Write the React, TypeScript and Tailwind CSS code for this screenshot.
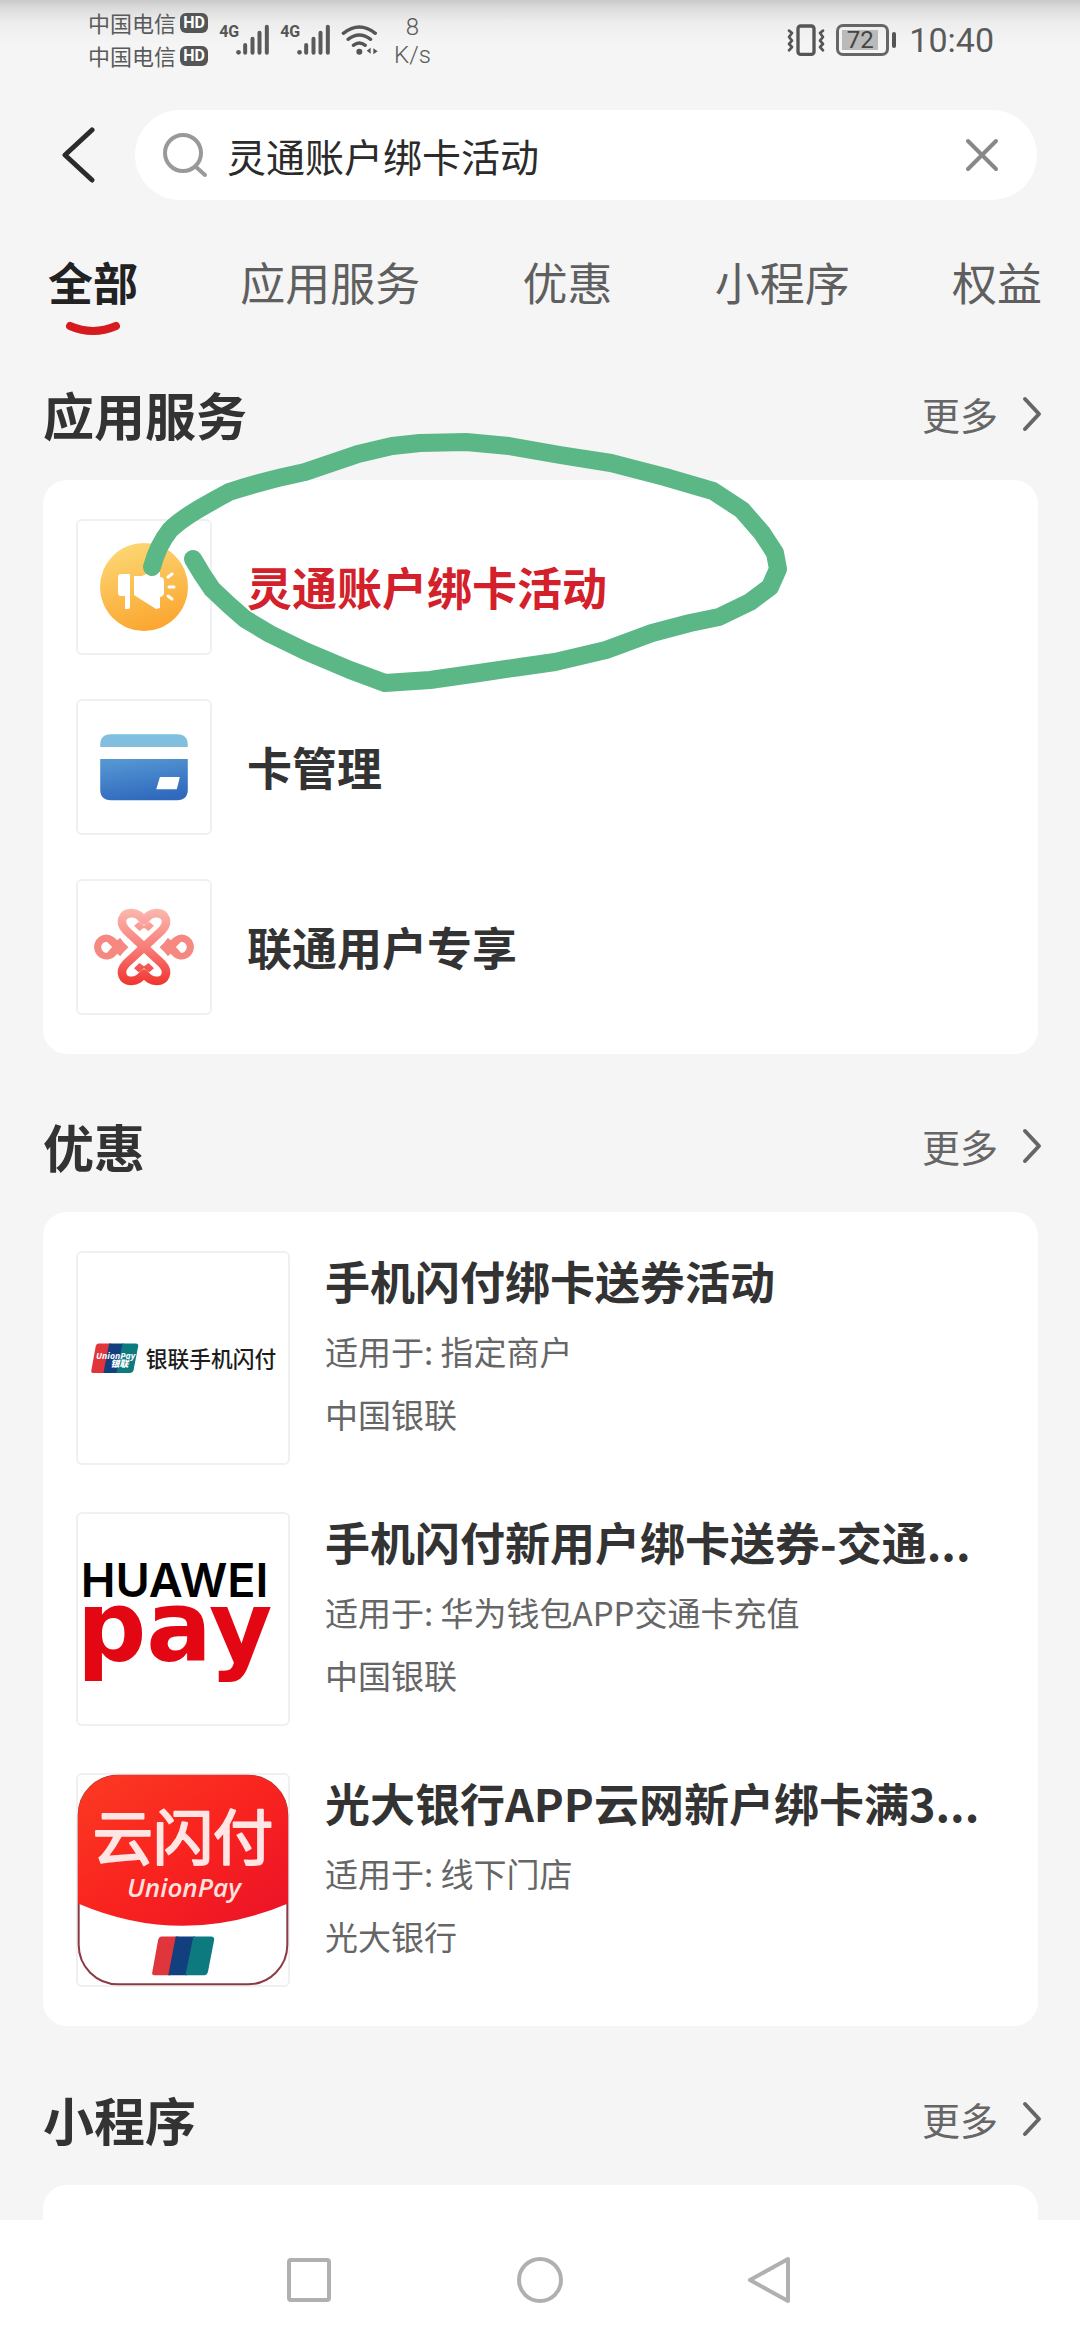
import type { ReactNode } from 'react';

function SignalIcon() {
  return (
    <svg viewBox="0 0 152 96" className="h-8 w-[51px] overflow-visible" aria-hidden="true">
      <text x="0" y="40" fontSize="48" fontWeight="700" fontFamily="Roboto, sans-serif" fill="#555">
        4G
      </text>
      <g fill="#5a5a5a">
        <circle cx="58" cy="85" r="7" />
        <rect x="72" y="57" width="12" height="35" rx="6" />
        <rect x="94" y="38" width="12" height="54" rx="6" />
        <rect x="115" y="20" width="12" height="72" rx="6" />
        <rect x="137" y="2" width="12" height="90" rx="6" />
      </g>
    </svg>
  );
}

function WifiIcon() {
  return (
    <svg viewBox="0 0 112 96" className="h-8 w-[38px]" fill="none" stroke="#555" strokeLinecap="round" aria-hidden="true">
      <path d="M6 28 Q54 -10 102 28" strokeWidth="10" />
      <path d="M20 46 Q54 20 88 46" strokeWidth="10" />
      <path d="M36 64 Q54 50 72 64" strokeWidth="10" />
      <circle cx="54" cy="83" r="9" fill="#555" stroke="none" />
      <path d="M76 80 L88 71 V89 Z M109 82 L96 73 V91 Z" fill="#555" stroke="none" />
    </svg>
  );
}

function VibrateIcon() {
  return (
    <svg viewBox="0 0 114 96" className="h-8 w-[38px]" fill="none" stroke="#555" strokeLinecap="round" strokeLinejoin="round" aria-hidden="true">
      <rect x="33" y="6" width="48" height="85" rx="8" strokeWidth="10" />
      <path d="M6 20 L15 27 L6 39 L15 50 L6 60 L15 69 L6 79" strokeWidth="8" />
      <path d="M108 20 L99 27 L108 39 L99 50 L108 60 L99 69 L108 79" strokeWidth="8" />
    </svg>
  );
}

function Carrier() {
  return (
    <div className="flex items-center gap-1">
      <span className="text-[22px] leading-[33px]">中国电信</span>
      <span className="flex h-5 w-7 items-center justify-center rounded-md bg-[#555] font-[Roboto,sans-serif] text-base leading-5 font-bold text-white">
        HD
      </span>
    </div>
  );
}

function StatusBar() {
  return (
    <header className="flex items-start justify-between bg-[linear-gradient(#c8c8c8_0px,#d8d8d8_6px,#ededed_22px,#f5f5f5_44px)] pt-[6px] pr-[86px] pb-2 pl-[88px] text-[#5a5a5a]">
      <div className="flex items-start gap-[11px]">
        <div>
          <Carrier />
          <Carrier />
        </div>
        <div className="flex gap-[10px] pt-[18px]">
          <SignalIcon />
          <SignalIcon />
          <WifiIcon />
        </div>
        <div className="pt-[7px] pl-1 text-center font-[Roboto,sans-serif] text-2xl leading-[28px] font-light">
          <div>8</div>
          <div>K/s</div>
        </div>
      </div>
      <div className="flex items-center pt-[18px]">
        <VibrateIcon />
        <div className="ml-[11px] flex h-8 w-[53px] rounded-[7px] border-3 border-[#666] p-[3px]">
          <div className="flex w-9 items-center justify-center bg-[#bababa] font-[Roboto,sans-serif] text-2xl leading-none text-[#444]">
            <span>72</span>
          </div>
        </div>
        <div className="ml-[3px] h-4 w-1 rounded-full bg-[#555]" />
        <time className="ml-[13px] font-[Roboto,sans-serif] text-[34px] leading-8">10:40</time>
      </div>
    </header>
  );
}

function SearchBar() {
  return (
    <div className="flex items-center pt-[30px] pr-[43px] pl-[60px]">
      <button type="button" aria-label="返回" className="mr-[39px]">
        <svg viewBox="0 0 36 56" className="h-14 w-9" fill="none" stroke="#2b2b2b" strokeWidth="5" strokeLinecap="round" strokeLinejoin="round">
          <path d="M32 3 L5 28 L32 53" />
        </svg>
      </button>
      <label className="flex h-[90px] flex-1 items-center rounded-full bg-white pr-[37px] pl-[28px]">
        <svg viewBox="0 0 46 46" className="h-[46px] w-[46px]" fill="none" stroke="#999" strokeWidth="4" strokeLinecap="round">
          <circle cx="20" cy="21" r="18" />
          <path d="M33 35 L42 43" />
        </svg>
        <input
          type="text"
          aria-label="搜索"
          defaultValue="灵通账户绑卡活动"
          className="ml-[18px] min-w-0 flex-1 bg-transparent text-[39px] leading-[58px] text-[#2b2b2b] outline-none"
        />
        <button type="button" aria-label="清除">
          <svg viewBox="0 0 36 36" className="h-9 w-9" stroke="#888" strokeWidth="4" strokeLinecap="round">
            <path d="M4 4 L32 32 M32 4 L4 32" />
          </svg>
        </button>
      </label>
    </div>
  );
}

function Tabs() {
  const tabs = ['全部', '应用服务', '优惠', '小程序', '权益'];
  return (
    <nav className="flex items-start justify-between pt-[52px] pr-[38px] pl-12">
      {tabs.map((tab, i) => (
        <button
          key={tab}
          type="button"
          className={
            i === 0
              ? 'flex flex-col items-center text-[45px] leading-[60px] font-bold text-[#222]'
              : 'text-[45px] leading-[60px] text-[#5f5f5f]'
          }
        >
          {tab}
          {i === 0 && (
            <svg viewBox="0 0 58 18" className="mt-2 h-[18px] w-[58px]" fill="none" stroke="#d71920" strokeWidth="8" strokeLinecap="round">
              <path d="M6 6 Q29 16 52 6" />
            </svg>
          )}
        </button>
      ))}
    </nav>
  );
}

function SectionHeader({ title }: { title: string }) {
  return (
    <div className="flex h-[126px] items-center justify-between pr-[38px] pb-[6px] pl-[43px]">
      <h2 className="text-[51px] leading-[74px] font-bold text-[#333]">{title}</h2>
      <a href="#more" className="flex items-center gap-6 text-[38px] leading-[56px] text-[#666]">
        更多
        <svg viewBox="0 0 20 36" className="h-9 w-5" fill="none" stroke="#666" strokeWidth="4" strokeLinecap="round" strokeLinejoin="round">
          <path d="M3 3 L17 18 L3 33" />
        </svg>
      </a>
    </div>
  );
}

function MegaphoneIcon() {
  return (
    <svg viewBox="0 0 136 136" className="h-full w-full">
      <defs>
        <linearGradient id="gold" x1="0.3" y1="0" x2="0.6" y2="1">
          <stop offset="0" stopColor="#fcd774" />
          <stop offset="1" stopColor="#fba52f" />
        </linearGradient>
      </defs>
      <circle cx="68" cy="68" r="44" fill="url(#gold)" />
      <path
        d="M42 58 Q42 55 45 55 H54 V88 Q54 90 52 90 H49 V77 H45 Q42 77 42 74 Z M58 57 H66 L74 53 H84 V58 Q88 58 88 63 V74 Q88 77 84 78 V89 L80 90 L58 76 Z"
        fill="#fff"
      />
      <path d="M92 58 L96 55 M93 68 H98 M92 77 L96 80" stroke="#fff" strokeWidth="3" strokeLinecap="round" />
    </svg>
  );
}

function CardIcon() {
  return (
    <svg viewBox="47 55 410 410" className="h-full w-full">
      <defs>
        <linearGradient id="cardTop" x1="0" y1="0" x2="0" y2="1">
          <stop offset="0" stopColor="#7cbfe2" />
          <stop offset="1" stopColor="#86bedd" />
        </linearGradient>
        <linearGradient id="cardBody" x1="0.3" y1="0" x2="0.6" y2="1">
          <stop offset="0" stopColor="#5496d2" />
          <stop offset="1" stopColor="#2f68bd" />
        </linearGradient>
      </defs>
      <path d="M120 200 V193 Q120 161 152 161 H352 Q384 161 384 193 V200 Z" fill="url(#cardTop)" />
      <path d="M120 236 H384 V328 Q384 360 352 360 H152 Q120 360 120 328 Z" fill="url(#cardBody)" />
      <path d="M300 290 H360 L351 327 H289 Z" fill="#fff" />
    </svg>
  );
}

function KnotIcon() {
  const ring =
    'M138 762 A38 38 0 1 0 160 832 L172 820 L180 828 L190 816 L205 801 L190 786 L180 772 L172 780 L160 770 A38 38 0 0 0 138 762 Z M140 784 L156 800 L140 818 A17 17 0 1 1 140 784 Z';
  return (
    <svg viewBox="47 595 410 410" className="h-full w-full">
      <defs>
        <linearGradient id="knot" gradientUnits="userSpaceOnUse" x1="0" y1="685" x2="0" y2="915">
          <stop offset="0" stopColor="#fbb8b0" />
          <stop offset="0.5" stopColor="#f77f78" />
          <stop offset="1" stopColor="#f0342f" />
        </linearGradient>
      </defs>
      <g fill="none" stroke="url(#knot)" strokeWidth="26" strokeLinejoin="round">
        <path d="M252 800 L198 750 C174 724 188 698 214 698 C232 698 240 706 252 720 C264 706 272 698 290 698 C316 698 330 724 306 750 Z" />
        <path d="M252 800 L198 850 C174 876 188 902 214 902 C232 902 240 894 252 880 C264 894 272 902 290 902 C316 902 330 876 306 850 Z" />
      </g>
      <g fill="url(#knot)">
        <path d="M222 736 L236 724 L252 736 L268 724 L282 736 L266 752 L252 742 L238 752 Z" />
        <path d="M222 864 L236 876 L252 864 L268 876 L282 864 L266 848 L252 858 L238 848 Z" />
      </g>
      <g fill="#f58880" fillRule="evenodd">
        <path d={ring} />
        <path d={ring} transform="matrix(-1 0 0 1 504 0)" />
      </g>
    </svg>
  );
}

function Slanted() {
  return (
    <>
      <path d="M22 0 H60 L42 88 H6 Q-1 88 1 80 L14 8 Q16 0 22 0 Z" fill="#e0353b" />
      <path d="M54 0 H98 L80 88 H37 Z" fill="#12407f" />
      <path d="M94 0 H134 Q142 0 141 8 L127 80 Q125 88 118 88 H76 Z" fill="#0d7a80" />
    </>
  );
}

function QuickPassLogo() {
  return (
    <svg viewBox="48 66 640 640" className="h-full w-full">
      <g transform="translate(93 343)">
        <Slanted />
        <text x="15" y="45" fontSize="26" fontStyle="italic" fontWeight="700" fontFamily="'Open Sans', sans-serif" fill="#fff">
          UnionPay
        </text>
        <text x="58" y="71" fontSize="27" fontStyle="italic" fontWeight="900" fontFamily="'Noto Sans CJK SC', sans-serif" fill="#fff">
          银联
        </text>
      </g>
      <text x="257" y="412" fontSize="65" fontWeight="500" fontFamily="'Noto Sans CJK SC', sans-serif" fill="#1c1c1c">
        银联手机闪付
      </text>
    </svg>
  );
}

function HuaweiPayLogo() {
  return (
    <svg viewBox="48 38 642 642" className="h-full w-full">
      <text x="62" y="294" fontSize="140" fontWeight="600" fontFamily="Inter, sans-serif" fill="#000">
        HUAWEI
      </text>
      <text x="50" y="486" fontSize="292" fontWeight="700" fontFamily="'DejaVu Sans', sans-serif" fill="#e30613">
        pay
      </text>
    </svg>
  );
}

function UnionPayLogo() {
  return (
    <svg viewBox="48 42 640 640" className="h-full w-full">
      <defs>
        <linearGradient id="redTop" x1="0" y1="0" x2="1" y2="1">
          <stop offset="0" stopColor="#fb3a22" />
          <stop offset="0.5" stopColor="#f9231f" />
          <stop offset="1" stopColor="#ea1228" />
        </linearGradient>
        <clipPath id="appShape">
          <rect x="54" y="48" width="628" height="628" rx="120" />
        </clipPath>
      </defs>
      <rect x="56" y="50" width="624" height="624" rx="118" fill="#fff" stroke="#8c3a44" strokeWidth="6" />
      <path d="M54 48 H682 V432 Q368 566 54 432 Z" fill="url(#redTop)" clipPath="url(#appShape)" />
      <text
        x="368"
        y="302"
        textAnchor="middle"
        fontSize="180"
        fontWeight="400"
        fontFamily="'Noto Sans CJK SC', sans-serif"
        fill="#ffe6e4"
        stroke="#ffe6e4"
        strokeWidth="6"
        strokeLinejoin="round"
      >
        云闪付
      </text>
      <text x="371" y="412" textAnchor="middle" fontSize="78" fontStyle="italic" fontWeight="600" fontFamily="'Open Sans', sans-serif" fill="#ffe1df">
        UnionPay
      </text>
      <g transform="translate(275 531) scale(1.32)">
        <Slanted />
      </g>
    </svg>
  );
}

function ServiceRow({ icon, name, hit }: { icon: ReactNode; name: string; hit?: boolean }) {
  return (
    <li>
      <a href="#service" className="flex items-center gap-[35px]">
        <span className="h-[136px] w-[136px] shrink-0 rounded-md ring-2 ring-[#f0f0f0] ring-inset">{icon}</span>
        <span className={hit ? 'text-[45px] leading-[66px] font-bold text-[#d3202a]' : 'text-[45px] leading-[66px] font-bold text-[#333]'}>
          {name}
        </span>
      </a>
    </li>
  );
}

function OfferRow({ logo, title, scope, owner }: { logo: ReactNode; title: string; scope: string; owner: string }) {
  return (
    <li>
      <a href="#offer" className="flex items-start gap-[35px]">
        <span className="h-[214px] w-[214px] shrink-0 rounded-md ring-2 ring-[#f0f0f0] ring-inset">{logo}</span>
        <span className="flex min-w-0 flex-col text-[33px] leading-[63px] text-[#666]">
          <span className="pb-[9px] text-[45px] leading-[60px] font-bold whitespace-nowrap text-[#333]">{title}</span>
          <span className="truncate">适用于: {scope}</span>
          <span className="truncate">{owner}</span>
        </span>
      </a>
    </li>
  );
}

function Scribble() {
  return (
    <svg
      viewBox="140 430 660 270"
      className="pointer-events-none absolute -top-[50px] left-[97px] h-[270px] w-[660px]"
      fill="none"
      stroke="#5bb886"
      strokeWidth="18"
      strokeLinecap="round"
      strokeLinejoin="round"
      aria-hidden="true"
    >
      <path d="M152 567 C156 552 162 540 170 530 C184 516 206 505 229 492 Q266 480 305 472 L358 454 L392 446 L420 443 L466 442 L509 446 L560 455 L611 463 L665 477 L713 491 L742 510 L762 533 L775 553 L778 569 L770 587 L750 602 L719 617 L690 623 L652 633 L606 650 L555 662 L520 667 L479 673 L430 680 L385 683 L350 670 L305 651 L270 634 L245 619 L229 605 L212 589 L202 574 L193 559" />
    </svg>
  );
}

function SystemNav() {
  return (
    <footer className="flex h-[120px] shrink-0 items-center justify-center gap-[183px] bg-white">
      <button type="button" aria-label="最近任务">
        <svg viewBox="0 0 48 48" className="h-12 w-12" fill="none" stroke="#b0b0b0" strokeWidth="4">
          <rect x="4" y="4" width="40" height="40" rx="2" />
        </svg>
      </button>
      <button type="button" aria-label="主屏幕">
        <svg viewBox="0 0 48 48" className="h-12 w-12" fill="none" stroke="#b0b0b0" strokeWidth="4">
          <circle cx="24" cy="24" r="21" />
        </svg>
      </button>
      <button type="button" aria-label="后退">
        <svg viewBox="0 0 48 48" className="h-12 w-12" fill="none" stroke="#b0b0b0" strokeWidth="4" strokeLinejoin="round">
          <path d="M41 3 V45 L3 24 Z" />
        </svg>
      </button>
    </footer>
  );
}

export default function App() {
  return (
    <div className="flex h-screen flex-col bg-[#f5f5f5] font-['Noto_Sans_CJK_SC',sans-serif]">
      <main className="min-h-0 flex-1 overflow-hidden">
        <StatusBar />
        <SearchBar />
        <Tabs />
        <section className="pt-4">
          <SectionHeader title="应用服务" />
          <div className="relative mr-[42px] ml-[43px] rounded-3xl bg-white px-[33px] py-[39px]">
            <ul className="flex flex-col gap-11">
              <ServiceRow icon={<MegaphoneIcon />} name="灵通账户绑卡活动" hit />
              <ServiceRow icon={<CardIcon />} name="卡管理" />
              <ServiceRow icon={<KnotIcon />} name="联通用户专享" />
            </ul>
            <Scribble />
          </div>
        </section>
        <section className="pt-8">
          <SectionHeader title="优惠" />
          <ul className="mr-[42px] ml-[43px] flex flex-col gap-[47px] rounded-3xl bg-white px-[33px] py-[39px]">
            <OfferRow logo={<QuickPassLogo />} title="手机闪付绑卡送券活动" scope="指定商户" owner="中国银联" />
            <OfferRow logo={<HuaweiPayLogo />} title="手机闪付新用户绑卡送券-交通..." scope="华为钱包APP交通卡充值" owner="中国银联" />
            <OfferRow logo={<UnionPayLogo />} title="光大银行APP云网新户绑卡满3..." scope="线下门店" owner="光大银行" />
          </ul>
        </section>
        <section className="pt-[33px]">
          <SectionHeader title="小程序" />
          <div className="mr-[42px] ml-[43px] h-40 rounded-t-3xl bg-white" />
        </section>
      </main>
      <SystemNav />
    </div>
  );
}
